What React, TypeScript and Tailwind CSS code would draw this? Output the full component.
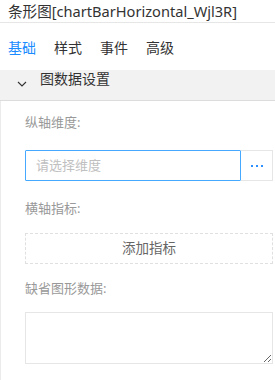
import React from 'react';

const font = { fontFamily: '"Noto Sans", "Noto Sans CJK SC", sans-serif' };

const tabs = ['基础', '样式', '事件', '高级'];

export default function App() {
  return (
    <div className="w-[275px] h-[380px] bg-white overflow-hidden text-[#333]" style={font}>
      {/* title */}
      <div className="h-[23px] border-b border-[#e6e6e6] pl-[8px] text-[14.6px] leading-[22px] text-[#333] whitespace-nowrap">
        条形图[chartBarHorizontal_Wjl3R]
      </div>

      {/* tabs */}
      <div className="h-[47px] flex items-center gap-[18px] pl-[8px] pt-[1px] text-[14px]">
        {tabs.map((t, i) => (
          <span key={t} className={i === 0 ? 'text-[#1a8cff]' : 'text-[#333]'}>{t}</span>
        ))}
      </div>

      {/* section header */}
      <div className="h-[31px] bg-[#f2f2f2] border-b border-[#dcdcdc] flex items-start">
        <svg width="10" height="6" viewBox="0 0 10 6" className="ml-[17px] mt-[11px]">
          <path d="M1 1 L5 5 L9 1" fill="none" stroke="#333" strokeWidth="1.1" />
        </svg>
        <span className="ml-[13px] mt-[1px] text-[14px] leading-[16px] text-[#333]">图数据设置</span>
      </div>

      {/* body */}
      <div className="border-l border-[#ebebeb] pl-[24px] pr-[2px] pt-[11px] h-[300px]">
        <div className="text-[13px] leading-[20px] text-[#999]">纵轴维度:</div>
        <div className="flex mt-[18px] h-[31px]">
          <div className="flex-1 border border-[#45a9ff] rounded-[1px] flex items-center pl-[10px] text-[13px] text-[#c0c0c0]">
            请选择维度
          </div>
          <div className="w-[32px] border border-l-0 border-[#e6e6e6] flex items-center justify-center gap-[3px] pt-[1px]">
            <span className="w-[2px] h-[2px] bg-[#2e90ff]" />
            <span className="w-[2px] h-[2px] bg-[#2e90ff]" />
            <span className="w-[2px] h-[2px] bg-[#2e90ff]" />
          </div>
        </div>

        <div className="mt-[17px] text-[13px] leading-[20px] text-[#999]">横轴指标:</div>
        <div className="mt-[15px] h-[31px] border border-dashed border-[#e0e0e0] flex items-center justify-center text-[13.5px] text-[#666]">
          添加指标
        </div>

        <div className="mt-[14px] text-[13px] leading-[20px] text-[#999]">缺省图形数据:</div>
        <textarea className="block mt-[14px] w-full h-[52px] border border-[#e6e6e6] outline-none" />
      </div>
    </div>
  );
}
